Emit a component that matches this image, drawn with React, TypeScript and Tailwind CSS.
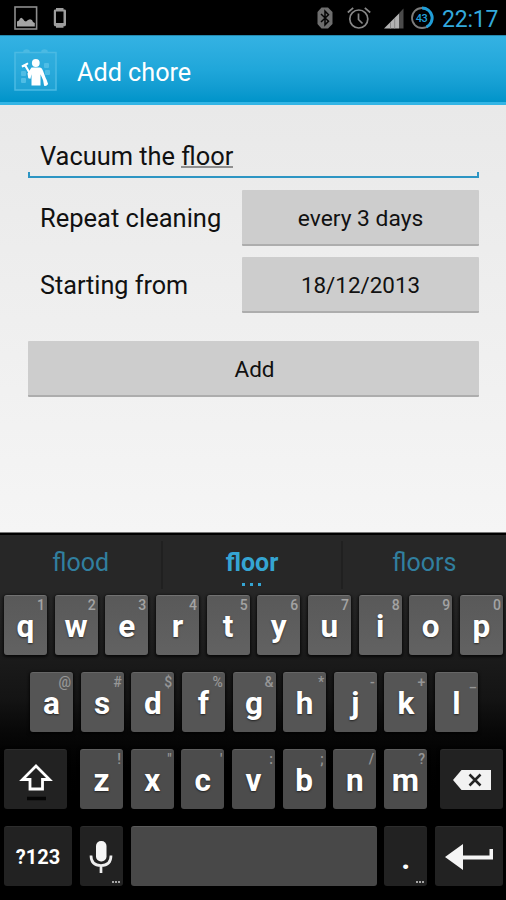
import type { ReactNode } from "react";

type KeyDef = { label: string; hint: string };

const rowOne: KeyDef[] = [
  { label: "q", hint: "1" },
  { label: "w", hint: "2" },
  { label: "e", hint: "3" },
  { label: "r", hint: "4" },
  { label: "t", hint: "5" },
  { label: "y", hint: "6" },
  { label: "u", hint: "7" },
  { label: "i", hint: "8" },
  { label: "o", hint: "9" },
  { label: "p", hint: "0" },
];

const rowTwo: KeyDef[] = [
  { label: "a", hint: "@" },
  { label: "s", hint: "#" },
  { label: "d", hint: "$" },
  { label: "f", hint: "%" },
  { label: "g", hint: "&" },
  { label: "h", hint: "*" },
  { label: "j", hint: "-" },
  { label: "k", hint: "+" },
  { label: "l", hint: "_" },
];

const rowThree: KeyDef[] = [
  { label: "z", hint: "!" },
  { label: "x", hint: '"' },
  { label: "c", hint: "'" },
  { label: "v", hint: ":" },
  { label: "b", hint: ";" },
  { label: "n", hint: "/" },
  { label: "m", hint: "?" },
];

function LetterKey({ def, tone, hintTone }: { def: KeyDef; tone: string; hintTone: string }) {
  return (
    <button
      className={`relative flex h-[60px] w-[43px] shrink-0 items-center justify-center rounded-[3px] border-t border-white/10 pt-[3px] shadow-[0_1px_3px_1px_rgba(0,0,0,0.7)] ${tone}`}
    >
      <span className="text-[31.500px] leading-none font-bold text-white [text-shadow:0_1px_2px_rgba(0,0,0,0.6)]">
        {def.label}
      </span>
      <span className={`absolute top-[2px] right-[2px] text-[14px] leading-[15px] font-medium ${hintTone}`}>
        {def.hint}
      </span>
    </button>
  );
}

function DarkKey({ width, children }: { width: string; children: ReactNode }) {
  return (
    <button
      className={`relative flex h-[60px] shrink-0 items-center justify-center rounded-[3px] border-t border-white/5 bg-[#222222] text-white shadow-[0_1px_3px_1px_rgba(0,0,0,0.7)] ${width}`}
    >
      {children}
    </button>
  );
}

function StatusBar() {
  return (
    <div className="flex h-[35px] shrink-0 items-center bg-black">
      <svg className="ml-[14px] h-6 w-6" viewBox="0 0 24 24">
        <rect x="1" y="1" width="21.6" height="22" fill="none" stroke="#8d8d8d" strokeWidth="1.6" />
        <path d="M3 20.500v-5l2-1 1-2 1.500-.8 1.500 1.300 1.500 2 1.500.5 2-1.500 2-.8 2 .8 1 2 1.800 1v3.500z" fill="#a5a5a5" />
      </svg>
      <svg className="ml-[15px] h-6 w-[14px]" viewBox="0 0 14 24">
        <path
          fillRule="evenodd"
          d="M3 2h7.500v1.500h1.500q1 .3 1 1.500v13.500q0 1.300-1 1.700h-1.500v1.500H3v-1.500H1.800q-1-.4-1-1.700V5q0-1.200 1-1.500H3zM3 5.500v11.500h7.500V5.500z"
          fill="#9d9d9d"
        />
      </svg>
      <svg className="ml-[249px] h-6 w-[18px]" viewBox="0 0 18 24">
        <path d="M5.500 1.500h6.500L16.500 6v12l-4.500 4.500H5.500L1.500 18V6z" fill="#6e6e6e" />
        <path d="M5 8l7.500 7.200L9 18.800V5.200l3.500 3.600L5 16" fill="none" stroke="#050505" strokeWidth="1.500" />
      </svg>
      <svg className="ml-[13px] h-6 w-6" viewBox="0 0 24 24" fill="none" stroke="#878787" strokeWidth="1.700">
        <circle cx="11.800" cy="13" r="9" />
        <path d="M11.500 7.500v6l4 4M.8 6.500l5.400-4.700M17.800 1.800l5.400 4.700" />
      </svg>
      <svg className="ml-[11px] h-6 w-6" viewBox="0 0 24 24">
        <path d="M2 22.500L17 7.500v15z" fill="#b3b3b3" />
        <path d="M17 7.200L21.500 2.500v20H17z" fill="#4b4b4b" />
        <path d="M8.500 16v6.500M12.700 12v10.500" stroke="#888" />
      </svg>
      <svg className="ml-[4px] h-6 w-6" viewBox="0 0 24 24">
        <circle cx="12" cy="12" r="10" fill="none" stroke="#7c7c7c" strokeWidth="1.800" />
        <path d="M12 2a10 10 0 0 1 4.500 19" fill="none" stroke="#209ed8" strokeWidth="3" />
        <text x="11.500" y="16" textAnchor="middle" fontFamily="Roboto" fontWeight="500" fontSize="11" letterSpacing="-0.500" fill="#209ed8">
          43
        </text>
      </svg>
      <span className="ml-[8px] pt-[3px] text-[23px] leading-none tracking-[-0.200px] text-[#33a9dc]">22:17</span>
    </div>
  );
}

function AppIcon() {
  return (
    <svg className="mt-[3px] h-[44px] w-[44px]" viewBox="0 0 44 44">
      <rect x="1" y="3.500" width="41" height="37.500" fill="#43b4de" fillOpacity=".3" stroke="#4bbae3" strokeWidth="1.500" />
      <path d="M10 3a3 3 0 0 1 5 0M28 3a3 3 0 0 1 5 0" stroke="#4bbae3" strokeWidth="3" fill="none" />
      <g fill="#4fbde5">
        <rect x="7" y="22" width="5" height="5" rx="1" />
        <rect x="7" y="29" width="5" height="5" rx="1" />
        <rect x="30" y="14" width="5" height="5" rx="1" />
        <rect x="31" y="21" width="5" height="5" rx="1" />
      </g>
      <g fill="#fff" transform="translate(0 1.500)">
        <circle cx="21.800" cy="12.500" r="3.900" />
        <path d="M17.500 17h8.600q2 .4 3 3.500l2.600 7 .9 1.800 1.500 4.200q-1.500 2.500-4 1.800l-1-5.500-2.600-6v11.200h-9V23.500l-1 4.800-2.200-.5L13.500 23z" />
        <path d="M7.500 15l6-3 1 1.500-2 1.400 5.200 9-1.800 1-5.200-8.600-2.600.8z" />
      </g>
    </svg>
  );
}

function Suggestion({ text, width, active }: { text: string; width: string; active?: boolean }) {
  return (
    <div
      className={`relative text-center text-[25px] leading-[56px] ${width} ${
        active ? "font-bold text-[#35a5d3]" : "text-[#317f9f]"
      }`}
    >
      {text}
      {active && (
        <span className="absolute inset-x-0 bottom-[9px] flex justify-center gap-[5px]">
          <i className="size-[3px] bg-[#35a5d3]" />
          <i className="size-[3px] bg-[#35a5d3]" />
          <i className="size-[3px] bg-[#35a5d3]" />
        </span>
      )}
    </div>
  );
}

function MoreDots() {
  return (
    <span className="absolute right-[3px] bottom-[3px] flex gap-px">
      <i className="h-[2px] w-[2px] bg-[#a5a5a5]" />
      <i className="h-[2px] w-[2px] bg-[#a5a5a5]" />
      <i className="h-[2px] w-[2px] bg-[#a5a5a5]" />
    </span>
  );
}

const fieldButton =
  "flex h-[56px] items-center justify-center rounded-[1px] border-b-2 border-[#adadad] bg-[#cdcdcd] pt-[4px] text-[#111111]";

export default function App() {
  return (
    <div className="flex h-[900px] w-[506px] flex-col overflow-hidden bg-black font-[Roboto,sans-serif]">
      <StatusBar />

      <header className="flex h-[70px] shrink-0 items-center border-t border-b-[3px] border-t-[#2488ad] border-b-[#33b5e5] bg-linear-to-b from-[#34b2e3] via-[#20a7da] to-[#0094ca] pl-[14px]">
        <AppIcon />
        <h1 className="ml-[19px] pt-[8px] text-[25.200px] leading-none text-white">Add chore</h1>
      </header>

      <main className="flex h-[427px] shrink-0 flex-col bg-linear-to-b from-[#e9e9e9] to-[#f5f5f5] pr-[27px] pl-[28px] text-[#111111]">
        <div className="mt-[32px] flex h-[42px] flex-col">
          <div className="h-[35px] pl-[12px] text-[25.400px] leading-[39px]">
            Vacuum the <span className="inline-block h-[31px] border-b-2 border-[#8f8f8f]">floor</span>
          </div>
          <div className="h-[6px] border-x-2 border-b-2 border-[#2d95c3]" />
        </div>

        <div className="mt-[11px] flex items-center justify-between">
          <label className="pl-[12px] text-[25.500px]">Repeat cleaning</label>
          <button className={`${fieldButton} w-[237px] text-[22.800px]`}>every 3 days</button>
        </div>
        <div className="mt-[11px] flex items-center justify-between">
          <label className="pt-px pl-[12px] text-[25.200px]">Starting from</label>
          <button className={`${fieldButton} w-[237px] text-[22.400px]`}>18/12/2013</button>
        </div>
        <button className={`${fieldButton} mt-[28px] pl-[2px] text-[22.500px]`}>Add</button>
      </main>

      <section className="flex h-[368px] shrink-0 flex-col border-t border-[#777777] bg-linear-to-b from-[#272727] from-15% via-[#141414] via-45% to-black to-75%">
        <div className="flex h-[61.500px] border-t-2 border-black bg-[#272727]">
          <Suggestion text="flood" width="w-[162px]" />
          <i className="mt-[6px] h-[48px] w-[2px] bg-[#202020]" />
          <Suggestion text="floor" width="w-[178px]" active />
          <i className="mt-[6px] h-[48px] w-[2px] bg-[#202020]" />
          <Suggestion text="floors" width="w-[164px]" />
        </div>

        <div className="flex justify-between pr-[3px] pl-[4px]">
          {rowOne.map((k) => (
            <LetterKey key={k.label} def={k} tone="bg-linear-to-b from-[#595959] to-[#626262]" hintTone="text-[#a3a3a3]" />
          ))}
        </div>
        <div className="mt-[17px] flex justify-between pr-[28px] pl-[30px]">
          {rowTwo.map((k) => (
            <LetterKey key={k.label} def={k} tone="bg-[#555555]" hintTone="text-[#969696]" />
          ))}
        </div>
        <div className="mt-[17.500px] flex justify-between pr-[3px] pl-[4px]">
          <DarkKey width="w-[63px]">
            <svg className="h-[42px] w-[36px]" viewBox="0 0 36 42">
              <path d="M18 7L31.500 20.500H24.500V30H12V20.500H4.500z" fill="none" stroke="#fff" strokeWidth="2.800" />
              <path d="M9 39.500h19" stroke="#050505" strokeWidth="3.500" />
            </svg>
          </DarkKey>
          <div className="flex w-[347px] justify-between">
            {rowThree.map((k) => (
              <LetterKey key={k.label} def={k} tone="bg-[#4c4c4c]" hintTone="text-[#969696]" />
            ))}
          </div>
          <DarkKey width="w-[63px]">
            <svg className="h-[20px] w-[38px]" viewBox="0 0 38 20">
              <path d="M0 10L8.500 0H38v20H8.500z" fill="#f2f2f2" />
              <path d="M16.500 4.500l11 11M27.500 4.500l-11 11" stroke="#222" strokeWidth="2.500" />
            </svg>
          </DarkKey>
        </div>
        <div className="mt-[17px] flex justify-between pr-[3px] pl-[4px]">
          <DarkKey width="w-[68px]">
            <span className="pt-px text-[20px] leading-none font-bold">?123</span>
          </DarkKey>
          <DarkKey width="w-[43px]">
            <svg className="h-[32px] w-[24px]" viewBox="0 0 24 32">
              <rect x="7" y="0" width="10.500" height="20.500" rx="5" fill="#f5f5f5" />
              <path d="M2 14.500q0 10 10 10t10-10M12 24v8" fill="none" stroke="#eee" strokeWidth="2.700" />
            </svg>
            <MoreDots />
          </DarkKey>
          <button className="h-[60px] w-[246px] rounded-[3px] border-t border-white/10 bg-[#484848]" aria-label="space" />
          <DarkKey width="w-[43px]">
            <span className="pt-1 text-[31px] leading-none font-bold">.</span>
            <MoreDots />
          </DarkKey>
          <DarkKey width="w-[68px]">
            <svg className="h-[26px] w-[48px]" viewBox="0 0 48 26">
              <path d="M0 13L18 0v11.500h26.500V5H48v10.500H18V26z" fill="#f5f5f5" />
            </svg>
          </DarkKey>
        </div>
      </section>
    </div>
  );
}
